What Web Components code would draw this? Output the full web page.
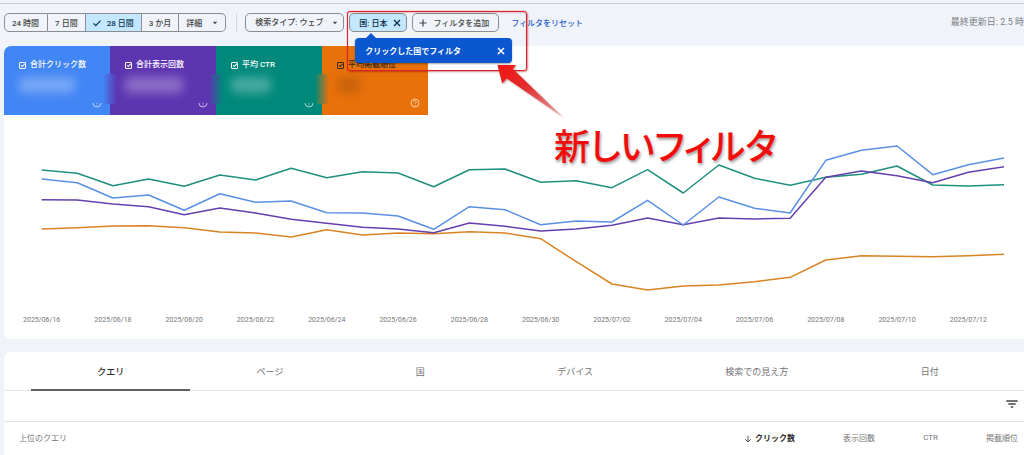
<!DOCTYPE html>
<html lang="ja">
<head>
<meta charset="utf-8">
<meta name="viewport" content="width=device-width, initial-scale=1">
<title>検索パフォーマンス</title>
<style>
  html, body {
    margin: 0;
    height: 100%;
  }
  body {
    font-family: Roboto, "Noto Sans CJK JP", sans-serif;
    font-size: 8px;
    color: #444746;
    background: #f0f3f9;
    overflow: hidden;
  }
</style>
</head>
<body>
<performance-page>
  <filter-bar slot="filters">
    <range-picker></range-picker>
    <search-type></search-type>
    <filter-chip>国: 日本
      <hint-popover slot="hint">クリックした国でフィルタ</hint-popover>
    </filter-chip>
    <add-filter>フィルタを追加</add-filter>
    <reset-link>フィルタをリセット</reset-link>
    <span slot="updated">最終更新日: 2.5 時</span>
  </filter-bar>

  <chart-panel slot="chart">
    <metric-card style="--card: #4285f4; --prev: #4285f4" value="56">合計クリック数</metric-card>
    <metric-card style="--card: #5e35b1; --prev: #4285f4" value="58">合計表示回数</metric-card>
    <metric-card style="--card: #00897b; --prev: #5e35b1" value="40">平均 CTR</metric-card>
    <metric-card style="--card: #e8710a; --prev: #00897b; --ink: #3c2a1a; --blob: #7a400e" value="24" full>平均掲載順位</metric-card>
  </chart-panel>

  <query-panel slot="table"></query-panel>
  <red-callout slot="callout">新しいフィルタ</red-callout>
</performance-page>

<script>
// Attach a shadow root and fill it from a template
class BaseElement extends HTMLElement {
  constructor() {
    super();
    this.attachShadow({ mode: "open" });
    const template = document.createElement("template");
    template.innerHTML = this.render();
    this.shadowRoot.appendChild(template.content.cloneNode(true));
  }

  render() {
    return "<slot></slot>";
  }
}

const chipStyle = `
  button, select {
    box-sizing: border-box;
    height: 19px;
    margin: 0;
    border: 1px solid #8a8d91;
    border-radius: 5px;
    background: transparent;
    color: #444746;
    font: 500 8px Roboto, "Noto Sans CJK JP", sans-serif;
    white-space: nowrap;
    cursor: pointer;
  }
  button {
    display: flex;
    align-items: center;
  }
`;

class PerformancePage extends BaseElement {
  render() {
    return `
      <style>
        :host {
          display: flex;
          flex-direction: column;
          min-height: 100%;
          position: relative;
        }
        main {
          display: flex;
          flex-direction: column;
          flex: 1;
          gap: 13px;
          padding-left: 4px;
        }
      </style>
      <slot name="filters"></slot>
      <main>
        <slot name="chart"></slot>
        <slot name="table"></slot>
      </main>
      <slot name="callout"></slot>
    `;
  }
}

class FilterBar extends BaseElement {
  render() {
    return `
      <style>
        :host {
          display: flex;
          align-items: center;
          gap: 5px;
          margin-top: 3px;
          padding: 9px 0 14px 4px;
          border-top: 1px solid #c7cacf;
        }
        .updated {
          flex: none;
          margin-left: auto;
          color: #7b7e82;
          font-size: 9px;
          line-height: 19px;
          white-space: nowrap;
        }
      </style>
      <slot></slot>
      <div class="updated"><slot name="updated"></slot></div>
    `;
  }
}

class RangePicker extends BaseElement {
  render() {
    return `
      <style>
        ${chipStyle}
        :host {
          display: flex;
          align-items: center;
        }
        button {
          padding: 0 7px;
          border-left-width: 0;
          border-radius: 0;
        }
        button:first-of-type {
          padding: 0 8px 0 7px;
          border-left-width: 1px;
          border-radius: 5px 0 0 5px;
        }
        button:last-of-type {
          gap: 10px;
          border-radius: 0 5px 5px 0;
        }
        button[aria-pressed="true"] {
          gap: 6px;
          background: #c2e7ff;
          color: #0b3350;
        }
        .separator {
          width: 1px;
          height: 19px;
          margin: 0 3px 0 10px;
          background: #d5d8dd;
        }
      </style>
      <button type="button">24 時間</button>
      <button type="button">7 日間</button>
      <button type="button" aria-pressed="true">
        <svg width="8" height="8" viewBox="0 0 8 8" fill="none" stroke="currentColor" stroke-width="1.2"><path d="M.5 4.3 2.8 6.6 7.6 1.6"/></svg>
        28 日間
      </button>
      <button type="button">3 か月</button>
      <button type="button" aria-haspopup="true">
        詳細
        <svg width="6" height="4" viewBox="0 0 6 4" fill="currentColor"><path d="M.8.8h4.4L3 3.2z"/></svg>
      </button>
      <div class="separator"></div>
    `;
  }
}

class SearchType extends BaseElement {
  render() {
    return `
      <style>
        ${chipStyle}
        :host {
          display: block;
          position: relative;
        }
        select {
          display: block;
          appearance: none;
          padding: 0 19px 0 9px;
        }
        svg {
          position: absolute;
          top: 8px;
          right: 6px;
          pointer-events: none;
        }
      </style>
      <select aria-label="検索タイプ">
        <option>検索タイプ: ウェブ</option>
      </select>
      <svg width="6" height="4" viewBox="0 0 6 4" fill="#444746"><path d="M.8.8h4.4L3 3.2z"/></svg>
    `;
  }
}

class FilterChip extends BaseElement {
  render() {
    return `
      <style>
        ${chipStyle}
        :host {
          display: block;
          position: relative;
        }
        button {
          gap: 6px;
          padding: 0 5px 0 9px;
          background: #c2e7ff;
          color: #0b2a45;
        }
      </style>
      <button type="button">
        <span><slot></slot></span>
        <svg width="8" height="8" viewBox="0 0 8 8" stroke="currentColor" stroke-width="1.3"><path d="M1 1l6 6M7 1 1 7"/></svg>
      </button>
      <slot name="hint"></slot>
    `;
  }
}

class HintPopover extends BaseElement {
  render() {
    return `
      <style>
        :host {
          display: flex;
          align-items: center;
          justify-content: space-between;
          box-sizing: border-box;
          position: absolute;
          z-index: 2;
          top: 25px;
          left: 6px;
          width: 157px;
          height: 25px;
          padding: 0 7px 0 10px;
          border-radius: 4px;
          background: #0b57d0;
          box-shadow: 0 1px 2px rgba(0, 0, 0, .35);
          color: #fff;
          font-size: 8px;
          font-weight: 700;
          white-space: nowrap;
        }
        :host::before {
          content: "";
          position: absolute;
          top: -5px;
          left: 10px;
          border: 6px solid transparent;
          border-top: 0;
          border-bottom-color: #0b57d0;
        }
        button {
          display: flex;
          padding: 0;
          border: 0;
          background: none;
          color: inherit;
        }
      </style>
      <slot></slot>
      <button type="button" aria-label="閉じる">
        <svg width="8" height="8" viewBox="0 0 8 8" stroke="currentColor" stroke-width="1.5"><path d="M1 1l6 6M7 1 1 7"/></svg>
      </button>
    `;
  }
}

class AddFilter extends BaseElement {
  render() {
    return `
      <style>
        ${chipStyle}
        :host {
          display: block;
        }
        button {
          gap: 6px;
          padding: 0 9px 0 6px;
        }
      </style>
      <button type="button">
        <svg width="8" height="8" viewBox="0 0 8 8" stroke="currentColor" stroke-width="1.2"><path d="M4 .5v7M.5 4h7"/></svg>
        <slot></slot>
      </button>
    `;
  }
}

class ResetLink extends BaseElement {
  render() {
    return `
      <style>
        :host {
          display: block;
          margin-left: 7px;
        }
        a {
          color: #2a62c9;
          font-weight: 500;
          text-decoration: none;
          white-space: nowrap;
        }
      </style>
      <a href="#"><slot></slot></a>
    `;
  }
}

class MetricCard extends BaseElement {
  render() {
    // The help icon is cut off at the top unless the card is "full"
    const help = this.hasAttribute("full")
      ? `<circle cx="5" cy="5" r="4"/><path d="M3.7 4.1a1.3 1.3 0 1 1 2 1.1c-.5.3-.7.5-.7.9M5 6.9v.8"/>`
      : `<path d="M1 5a4 4 0 0 0 8 0M5 4.8v1M5 6.6v.8"/>`;
    return `
      <style>
        :host {
          display: flex;
          flex-direction: column;
          justify-content: space-between;
          box-sizing: border-box;
          flex: 0 1 106px;
          height: 69px;
          padding: 13px 8px 7px 15px;
          position: relative;
          background: var(--card);
          color: var(--ink, #fff);
        }
        /* smeared edge towards the card before this one */
        :host::before {
          content: "";
          position: absolute;
          top: 28px;
          left: -7px;
          width: 14px;
          height: 30px;
          background: linear-gradient(90deg, var(--prev), var(--card));
        }
        :host(:first-of-type)::before {
          display: none;
        }
        label {
          display: flex;
          align-items: center;
          gap: 4px;
          font-size: 8px;
          font-weight: 500;
          line-height: 12px;
          white-space: nowrap;
        }
        input {
          appearance: none;
          display: grid;
          flex: none;
          width: 7px;
          height: 7px;
          margin: 0;
          border: 1px solid currentColor;
          border-radius: 1px;
          box-sizing: border-box;
          color: inherit;
        }
        input:checked::before {
          content: "";
          width: 4px;
          height: 2px;
          box-sizing: border-box;
          border: solid currentColor;
          border-width: 0 0 1px 1px;
          transform: rotate(-45deg);
          place-self: center;
        }
        .value {
          height: 16px;
          background: var(--blob, #fff);
          border-radius: 5px;
          filter: blur(5px);
          opacity: .28;
        }
        svg {
          align-self: flex-end;
          opacity: .8;
        }
      </style>
      <label><input type="checkbox" checked><span><slot></slot></span></label>
      <div class="value" style="width: ${this.getAttribute("value")}px"></div>
      <svg width="10" height="10" viewBox="0 0 10 10" fill="none" stroke="#fff" stroke-width=".8">${help}</svg>
    `;
  }
}

// One value per day from 06/16 to 07/13, as heights in the plot
const series = [
  ["#d98324", [229, 227.7, 226, 225.7, 227.7, 232, 233, 237, 229.7, 235, 233, 233.7, 231.7, 233, 238.7, 261.7, 284, 290, 286, 285, 281.7, 277.3, 260, 255.7, 256.3, 256.7, 255.7, 254.3]],
  ["#1f8f7f", [170, 173.3, 185.7, 179, 186.3, 175, 180, 168.3, 177.7, 171.7, 173, 186.7, 169.7, 169, 182.3, 180.7, 187.7, 169.7, 193, 165, 178.3, 185.3, 177.3, 174.3, 166, 185, 186, 184.8]],
  ["#6440b0", [199.7, 200, 204, 206.7, 214.7, 208, 213, 219.3, 223.3, 227.3, 229, 232.7, 223, 226.3, 231, 229, 225.3, 218, 224.7, 218, 219, 218.3, 177.3, 171, 175.7, 182.7, 172.3, 166.7]],
  ["#5a90e4", [179, 182.7, 198, 195, 210.3, 193.7, 202.3, 201, 212.7, 213, 216, 229.3, 206.7, 209.7, 224.7, 221, 222, 200.3, 225, 197, 208.3, 213, 160.3, 150.3, 146, 174.7, 164.7, 158]],
];

const dates = ["06/16", "06/18", "06/20", "06/22", "06/24", "06/26", "06/28", "06/30",
  "07/02", "07/04", "07/06", "07/08", "07/10", "07/12"];

class ChartPanel extends BaseElement {
  render() {
    const lines = series.map(([color, values]) => {
      const points = values.map((y, i) => `${i + 1},${y}`).join(" ");
      return `<polyline points="${points}" stroke="${color}"/>`;
    }).join("");
    return `
      <style>
        :host {
          display: block;
          border-radius: 7px 0 0 7px;
          background: #fff;
          overflow: hidden;
        }
        .metrics {
          display: flex;
        }
        .plot {
          padding: 0 20px 13px 2px;
        }
        svg {
          display: block;
          width: 100%;
          height: 199px;
          overflow: visible;
        }
        polyline {
          fill: none;
          stroke-width: 1.5px;
          stroke-linejoin: round;
          vector-effect: non-scaling-stroke;
        }
        .dates {
          display: grid;
          grid-template-columns: repeat(14, 1fr);
          color: #757575;
          font-size: 7px;
          line-height: 12px;
          text-align: center;
        }
      </style>
      <div class="metrics"><slot></slot></div>
      <div class="plot">
        <svg viewBox="0 115 28 199" preserveAspectRatio="none" role="img" aria-label="検索パフォーマンス">${lines}</svg>
        <div class="dates">${dates.map((d) => `<span>2025/${d}</span>`).join("")}</div>
      </div>
    `;
  }
}

class QueryPanel extends BaseElement {
  render() {
    const tabs = ["クエリ", "ページ", "国", "デバイス", "検索での見え方", "日付"];
    return `
      <style>
        :host {
          display: block;
          flex: 1;
          border-radius: 7px 0 0 0;
          background: #fff;
        }
        .tabs {
          display: flex;
          padding: 0 19px 0 27px;
          border-bottom: 1px solid #e6e6e8;
        }
        .tabs button {
          flex: 1 1 auto;
          height: 36px;
          margin-bottom: -1px;
          padding: 1px 0 0;
          border: 0;
          border-bottom: 2px solid transparent;
          background: none;
          color: #6f7275;
          font: 9px Roboto, "Noto Sans CJK JP", sans-serif;
          box-sizing: content-box;
        }
        .tabs button[aria-selected="true"] {
          border-color: #5f6163;
          color: #2b2b2b;
          font-weight: 500;
        }
        .tools {
          display: flex;
          align-items: center;
          justify-content: flex-end;
          box-sizing: border-box;
          height: 31px;
          padding: 0 6px 4px 0;
          border-bottom: 1px solid #e3e3e5;
        }
        .tools button {
          display: flex;
          padding: 0;
          border: 0;
          background: none;
        }
        table {
          width: 100%;
          padding-right: 6px;
          border-collapse: separate;
          border-spacing: 0;
          table-layout: fixed;
        }
        th {
          width: 80px;
          height: 31px;
          padding: 0;
          color: #757575;
          font-size: 8px;
          font-weight: 400;
          text-align: right;
          white-space: nowrap;
        }
        th:first-child {
          width: auto;
          padding-left: 15px;
          text-align: left;
        }
        th.ctr {
          width: 63px;
        }
        th[aria-sort] {
          color: #2b2b2b;
          font-weight: 700;
        }
        th svg {
          margin-right: 3px;
          vertical-align: middle;
        }
      </style>
      <div class="tabs" role="tablist">
        ${tabs.map((t, i) => `<button type="button" role="tab" aria-selected="${i === 0}">${t}</button>`).join("")}
      </div>
      <div class="tools">
        <button type="button" aria-label="行をフィルタ">
          <svg width="12" height="8" viewBox="0 0 12 8" stroke="#444746" stroke-width="1.3"><path d="M.3 1h11.4M2.3 4h7.4M4.8 7h2.4"/></svg>
        </button>
      </div>
      <table>
        <thead>
          <tr>
            <th scope="col">上位のクエリ</th>
            <th scope="col" aria-sort="descending"><svg width="8" height="8" viewBox="0 0 8 8" fill="none" stroke="#555"><path d="M4 .8v6M1.2 4.2 4 7l2.8-2.8"/></svg>クリック数</th>
            <th scope="col">表示回数</th>
            <th scope="col" class="ctr">CTR</th>
            <th scope="col">掲載順位</th>
          </tr>
        </thead>
      </table>
    `;
  }
}

// Hand-placed note over the page: frame, arrow and large caption
class RedCallout extends BaseElement {
  render() {
    return `
      <style>
        :host {
          position: absolute;
          z-index: 3;
          top: 11px;
          left: 347px;
          pointer-events: none;
        }
        .frame {
          box-sizing: border-box;
          width: 180px;
          height: 60px;
          border: 1px solid #e3202a;
          border-radius: 3px;
          box-shadow: 0 0 1px #e3202a, 1px 1px 2px rgba(120, 0, 0, .4), inset 0 1px 2px rgba(120, 0, 0, .2);
        }
        svg {
          position: absolute;
          top: 52px;
          left: 149px;
          overflow: visible;
          filter: drop-shadow(1px 1px 1px rgba(90, 0, 0, .4));
        }
        .text {
          position: absolute;
          top: 105px;
          left: 207px;
          color: #f20d0d;
          font-family: "Noto Sans CJK JP", sans-serif;
          font-size: 36px;
          font-weight: 500;
          font-feature-settings: "palt";
          line-height: 56px;
          text-shadow: 1px 2px 3px rgba(0, 0, 0, .4);
          white-space: nowrap;
        }
      </style>
      <div class="frame"></div>
      <svg width="70" height="58" viewBox="0 0 70 58">
        <defs>
          <linearGradient id="fade" x1="0" y1="0" x2="1" y2="1">
            <stop offset="0" stop-color="#f01414"/>
            <stop offset=".4" stop-color="#e62a2a"/>
            <stop offset="1" stop-color="#e05050" stop-opacity=".35"/>
          </linearGradient>
        </defs>
        <path fill="url(#fade)" d="M1.500 2 20 2 16.800 6 68 55 10.800 15.500 6.200 20.500z"/>
      </svg>
      <div class="text"><slot></slot></div>
    `;
  }
}

// MetricCard reads its attributes, so every class is registered after the markup
customElements.define("performance-page", PerformancePage);
customElements.define("filter-bar", FilterBar);
customElements.define("range-picker", RangePicker);
customElements.define("search-type", SearchType);
customElements.define("filter-chip", FilterChip);
customElements.define("hint-popover", HintPopover);
customElements.define("add-filter", AddFilter);
customElements.define("reset-link", ResetLink);
customElements.define("metric-card", MetricCard);
customElements.define("chart-panel", ChartPanel);
customElements.define("query-panel", QueryPanel);
customElements.define("red-callout", RedCallout);
</script>
</body>
</html>
